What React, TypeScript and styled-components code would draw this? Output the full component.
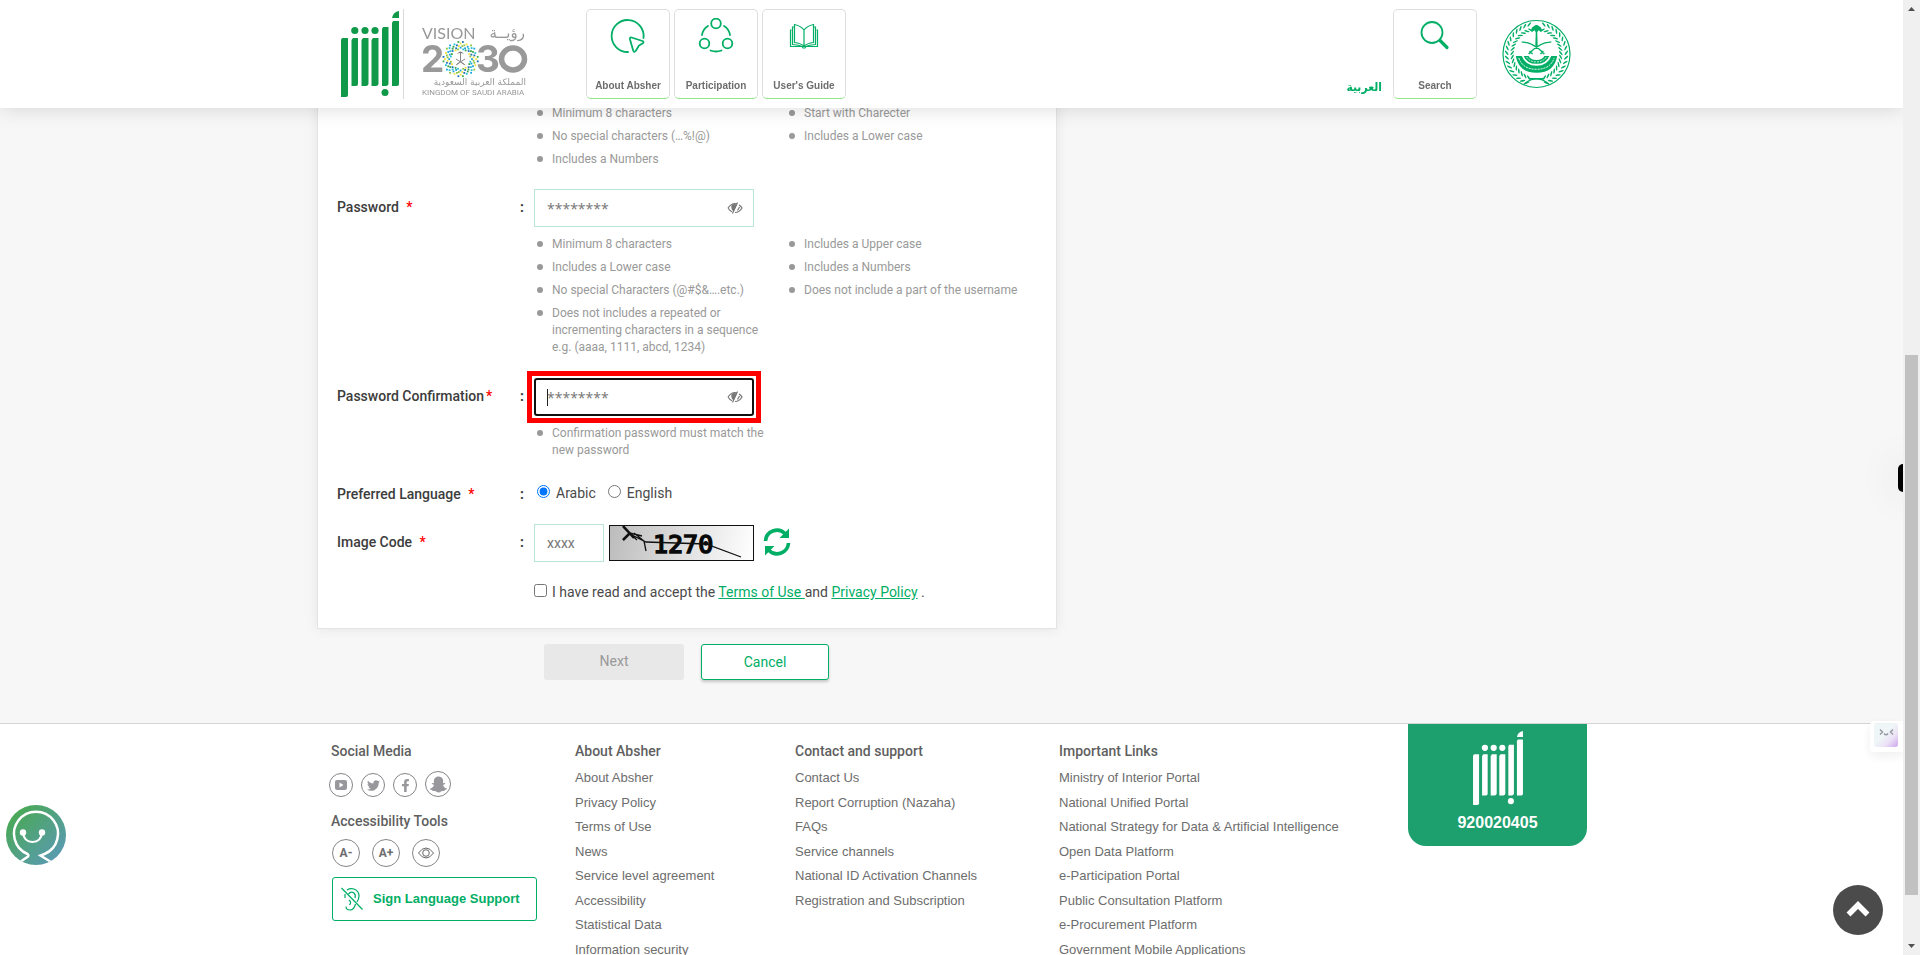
import React from "react";
import styled, { createGlobalStyle, css } from "styled-components";
import { FaTwitter, FaFacebookF, FaSnapchatGhost } from "react-icons/fa";

const GREEN = "#00ae65";
const LOGO_GREEN = "#11994a";
const GREY = "#6d6d6d";
const FONT = `Roboto, "Liberation Sans", sans-serif`;
const FOOTER_FONT = `"Liberation Sans", Arial, sans-serif`;

const GlobalStyle = createGlobalStyle`
  *, *::before, *::after { box-sizing: border-box; }
  body { margin: 0; font-family: ${FONT}; font-size: 14px; color: #3c3c3c; background: #fff; }
  ul, p, h2 { margin: 0; padding: 0; }
  ul { list-style: none; }
  button, input { font-family: inherit; }
`;

const Page = styled.div`
  height: 100vh;
  overflow: hidden;
  padding-right: 17px;
`;

const Container = styled.div`
  width: 100%;
  max-width: 1269px;
  margin: 0 auto;
`;

/* ---------- header ---------- */

const Header = styled.header`
  position: fixed;
  z-index: 5;
  top: 0;
  left: 0;
  right: 17px;
  background: #fff;
  box-shadow: 0 0 20px rgba(0, 0, 0, 0.15);
`;

const HeaderRow = styled(Container)`
  display: flex;
  align-items: flex-start;
  height: 108px;
  padding: 9px 15px 9px 24px;
`;

const Brand = styled.a`
  display: flex;
  height: 90px;
  padding: 2px 4px 0 0;
  border-right: 1px solid #d9d9d9;
`;

const VisionLink = styled.a`
  display: block;
  padding-top: 14px;
  margin: 0 58px 0 18px;
`;

const Nav = styled.nav`
  display: flex;
  gap: 4px;
`;

const cardLook = css`
  display: flex;
  flex-direction: column;
  align-items: center;
  justify-content: space-between;
  width: 84px;
  height: 90px;
  padding: 8px 0 5px;
  background: #fff;
  border: 1px solid #dedede;
  border-bottom-color: #8ee884;
  border-radius: 5px;
  color: ${GREY};
  font-family: ${FOOTER_FONT};
  font-weight: 700;
  font-size: 10px;
  line-height: 14px;
  white-space: nowrap;
  text-decoration: none;
`;

const NavCard = styled.a`
  ${cardLook}
`;

const SearchCard = styled.button`
  ${cardLook}
`;

const HeaderTools = styled.div`
  display: flex;
  align-items: flex-start;
  margin-left: auto;
`;

const LanguageLink = styled.a`
  align-self: flex-end;
  margin: 0 11px 2px 0;
  color: ${GREEN};
  font: 700 12px/20px "DejaVu Sans Condensed", "DejaVu Sans", sans-serif;
  text-decoration: none;
`;

const EmblemBox = styled.div`
  padding: 10px 0 0 25px;
`;

/* ---------- form ---------- */

const Main = styled.main`
  padding: 88px 0 43px;
  background: #f7f7f7;
`;

const FormCard = styled.section`
  width: 740px;
  padding: 16px 18px 26px 19px;
  background: #fff;
  border: 1px solid #e4e4e4;
  box-shadow: 0 0 12px rgba(0, 0, 0, 0.08);
`;

const Row = styled.div<{ $gap?: number }>`
  display: grid;
  grid-template-columns: 183px 14px 1fr;
  margin-top: ${({ $gap }) => $gap ?? 0}px;
`;

const Label = styled.label<{ $tall?: boolean }>`
  font-weight: 500;
  font-size: 14px;
  line-height: ${({ $tall }) => ($tall ? 36 : 20)}px;
`;

const Colon = styled.span<{ $tall?: boolean }>`
  font-weight: 700;
  line-height: ${({ $tall }) => ($tall ? 36 : 20)}px;
`;

const Star = styled.span<{ $near?: boolean }>`
  margin-left: ${({ $near }) => ($near ? 2 : 4)}px;
  color: #f00;
`;

const Field = styled.div`
  grid-column: 3;
`;

const InputBox = styled.div<{ $marked?: boolean }>`
  position: relative;
  width: 220px;
  ${({ $marked }) =>
    $marked &&
    css`
      outline: 5px solid #f00;
      outline-offset: 2px;
      &::before {
        content: "";
        position: absolute;
        left: 13px;
        top: 11px;
        width: 1px;
        height: 17px;
        background: #222;
      }
    `}
`;

const TextInput = styled.input<{ $focus?: boolean }>`
  display: block;
  width: 100%;
  height: 38px;
  padding: 0 12px;
  border: 1px solid #b9e6d6;
  background: #fff;
  font-size: 14px;
  outline: none;
  &::placeholder {
    color: #757575;
    opacity: 1;
  }
  ${({ $focus }) =>
    $focus &&
    css`
      padding: 0 11px;
      border: 2px solid #101010;
      border-radius: 3px;
    `}
  &[type="password"] {
    font-family: "Open Sans", sans-serif;
  }
`;

const EyeToggle = styled.button`
  position: absolute;
  right: 11px;
  top: 11px;
  display: flex;
  padding: 2px 0;
  border: 0;
  background: none;
`;

const Hints = styled.div`
  display: grid;
  grid-template-columns: 252px 1fr;
  align-items: start;
`;

const HintList = styled.ul`
  display: flex;
  flex-direction: column;
  gap: 6px;
`;

const Hint = styled.li`
  position: relative;
  padding: 0 12px 0 18px;
  color: #999;
  font-size: 12px;
  line-height: 17px;
  &::before {
    content: "";
    position: absolute;
    left: 3px;
    top: 5px;
    width: 6px;
    height: 6px;
    border-radius: 50%;
    background: #999;
  }
`;

const Spaced = styled.div`
  margin-top: 9px;
`;

const Radios = styled.div`
  display: flex;
  align-items: center;
  gap: 11px;
  color: #4a4a4a;
`;

const Choice = styled.label`
  display: flex;
  align-items: center;
  gap: 6px;
  height: 20px;
  padding-bottom: 2px;
  input {
    width: 13px;
    height: 13px;
    margin: 0 0 3px 3px;
    accent-color: #0075ff;
  }
  & + & input {
    margin-left: 1px;
  }
`;

const CodeLine = styled.div`
  display: flex;
  align-items: center;
`;

const CodeBox = styled.div`
  width: 70px;
`;

const Captcha = styled.div`
  width: 145px;
  height: 36px;
  margin: 0 9px 0 5px;
  border: 1px solid #111;
  background: linear-gradient(100deg, #bcbcbc, #fff);
`;

const PlainButton = styled.button`
  display: flex;
  padding: 0 0 2px;
  border: 0;
  background: none;
`;

const Terms = styled.div`
  display: flex;
  align-items: center;
  gap: 5px;
  color: #4a4a4a;
  line-height: 20px;
  input {
    width: 13px;
    height: 13px;
    margin: 0 0 3px;
  }
  a {
    color: ${GREEN};
  }
`;

const Actions = styled.div`
  display: flex;
  gap: 17px;
  padding: 15px 0 0 227px;
`;

const ActionButton = styled.button<{ $plain?: boolean }>`
  width: 140px;
  height: 36px;
  padding: 0 0 2px;
  border: 0;
  border-radius: 3px;
  background: #e8e8e8;
  color: #999;
  font-size: 14px;
  ${({ $plain }) =>
    $plain &&
    css`
      width: 128px;
      padding: 0;
      border: 1px solid ${GREEN};
      background: #fff;
      color: ${GREEN};
      box-shadow: 0 2px 3px rgba(0, 0, 0, 0.2);
    `}
`;

/* ---------- footer ---------- */

const Footer = styled.footer`
  border-top: 1px solid #d4d4d4;
  background: #fff;
  font-family: ${FOOTER_FONT};
  color: ${GREY};
`;

const FooterRow = styled(Container)`
  display: grid;
  grid-template-columns: 244px 220px 264px 349px 179px;
  padding-left: 14px;
`;

const FooterColumn = styled.div`
  padding-top: 17px;
`;

const FooterTitle = styled.h2`
  font: 500 14px/20px ${FONT};
  color: #5f5f5f;
`;

const LinkList = styled.ul`
  display: grid;
  grid-template-rows: repeat(8, 1fr);
  height: 196px;
  margin-top: 5px;
  align-items: center;
  font-size: 13px;
  line-height: 20px;
  a {
    color: ${GREY};
    text-decoration: none;
    white-space: nowrap;
  }
`;

const Socials = styled.div`
  display: flex;
  align-items: flex-end;
  gap: 8px;
  height: 26px;
  margin: 10px 0 14px -2px;
`;

const SocialLink = styled.a<{ $large?: boolean }>`
  display: flex;
  align-items: center;
  justify-content: center;
  width: ${({ $large }) => ($large ? 26 : 24)}px;
  height: ${({ $large }) => ($large ? 26 : 24)}px;
  border: 1px solid #85858a;
  border-radius: 50%;
  color: #98989c;
`;

const Tools = styled.div`
  display: flex;
  gap: 12px;
  margin: 8px 0 10px 1px;
`;

const ToolButton = styled.button`
  display: flex;
  align-items: center;
  justify-content: center;
  width: 28px;
  height: 28px;
  padding: 0;
  border: 1px solid #85858a;
  border-radius: 50%;
  background: #fff;
  color: ${GREY};
  font: 700 12px/14px ${FONT};
`;

const SignButton = styled.button`
  display: flex;
  align-items: center;
  gap: 10px;
  width: 205px;
  height: 44px;
  padding: 0 8px;
  margin-left: 1px;
  border: 1px solid ${GREEN};
  border-radius: 3px;
  background: #fff;
  color: ${GREEN};
  font: 700 13px/20px ${FOOTER_FONT};
  white-space: nowrap;
`;

const CallBox = styled.div`
  display: flex;
  flex-direction: column;
  align-items: center;
  align-self: start;
  height: 122px;
  padding-top: 7px;
  border-radius: 0 0 18px 18px;
  background: #1e9f6e;
  color: #fff;
  font-weight: 700;
  font-size: 16px;
  line-height: 36px;
`;

/* ---------- floating parts ---------- */

const ChatBot = styled.button`
  position: fixed;
  left: 6px;
  bottom: 90px;
  padding: 0;
  border: 0;
  background: none;
  display: flex;
`;

const ToTop = styled.button`
  position: fixed;
  right: 37px;
  bottom: 20px;
  display: flex;
  align-items: center;
  justify-content: center;
  width: 50px;
  height: 50px;
  padding: 0 0 2px;
  border: 0;
  border-radius: 50%;
  background: #4b4b4b;
`;

const EdgeTab = styled.div`
  position: fixed;
  right: 17px;
  top: 464px;
  width: 5px;
  height: 28px;
  border-radius: 5px 0 0 5px;
  background: #000;
  box-shadow: 4px 0 40px 10px rgba(0, 0, 0, 0.06);
`;

const EdgeWidget = styled.div`
  position: fixed;
  right: 17px;
  top: 721px;
  padding: 2px 5px 5px 4px;
  border-radius: 4px 0 0 4px;
  background: #fff;
  box-shadow: 0 4px 12px rgba(0, 0, 0, 0.08);
  opacity: 0.9;
`;

const WidgetFace = styled.div`
  width: 24px;
  height: 24px;
  border-radius: 3px;
  background: linear-gradient(135deg, #eef5f8 45%, #eadff6 70%, #c89bea);
  svg {
    display: block;
  }
`;

const ScrollTrack = styled.div`
  position: fixed;
  z-index: 6;
  top: 0;
  right: 0;
  bottom: 0;
  width: 17px;
  display: flex;
  flex-direction: column;
  align-items: center;
  justify-content: space-between;
  padding: 7px 0;
  background: #f0f0f0;
`;

const ScrollThumb = styled.div`
  position: absolute;
  top: 355px;
  left: 2px;
  width: 13px;
  height: 540px;
  background: #c1c1c1;
`;

/* ---------- drawings ---------- */

function AbsherLogo({ width, color }: { width: number; color: string }) {
  return (
    <svg width={width} height={Math.round((width * 86) / 58)} viewBox="0 0 58 86" fill={color} aria-label="Absher">
      <path d="M2 27H7V84Q7 86 5 86H0V29Q0 27 2 27Z" />
      <path d="M12 27H17V73Q17 75 15 75H10.500V29Z" />
      <path d="M22 27H27.500V73Q27 75 25 75H20.500V29Z" />
      <path d="M32 27H37.500V73Q37 75 35 75H30.500V29Z" />
      <path d="M42 16H47.500V73Q47 75 45 75H41V18Z" />
      <path d="M52 10H58V73Q58 75 56 75H51V12Z" />
      <path d="M51 7Q52 1 58 0V7Z" />
      <circle cx="13.800" cy="19.500" r="3.600" />
      <circle cx="24" cy="19.500" r="3.600" />
      <circle cx="34" cy="19.500" r="3.600" />
      <circle cx="44" cy="81.500" r="3.500" />
    </svg>
  );
}

const DOT_COLOURS = ["#18a3dc", "#8ac640", "#f3e13a", "#1d6fb8", "#3aa84a", "#29c0d6"];

function VisionLogo() {
  const dots = [] as React.ReactNode[];
  [10.5, 12.6, 14.7, 16.8].forEach((r, ring) => {
    const n = 24;
    for (let i = 0; i < n; i++) {
      const a = ((i + (ring % 2) / 2) / n) * Math.PI * 2;
      const rr = r + Math.cos(a * 8) * 0.9;
      dots.push(
        <rect
          key={`${ring}-${i}`}
          x={38.5 + Math.cos(a) * rr - 0.8}
          y={36 + Math.sin(a) * rr - 0.8}
          width="1.8"
          height="1.8"
          fill={DOT_COLOURS[(i * 5 + ring) % 6]}
        />
      );
    }
  });
  return (
    <svg width="106" height="76" viewBox="0 0 106 76" fill="#999" aria-label="Vision 2030">
      <text x="0" y="16" fontFamily="Lato, sans-serif" fontSize="16">VISION</text>
      <text x="103" y="15" textAnchor="end" fontFamily="DejaVu Sans, sans-serif" fontSize="15">رؤيــة</text>
      <text x="-1" y="49" fontFamily="Inter, sans-serif" fontWeight="700" fontSize="37">2</text>
      <text x="54" y="49" fontFamily="Inter, sans-serif" fontWeight="700" fontSize="37">3</text>
      <ellipse cx="91" cy="36" rx="11.500" ry="11" fill="none" stroke="#999" strokeWidth="5.500" />
      {dots}
      <path d="M38.500 29V39M38.500 39L34 42M38.500 39L43 42M34 36L42 41M43 36L35 41" stroke="#888" strokeWidth="1" />
      <path d="M35 31Q38.500 26 42 31Q38.500 29 35 31Z" fill="#777" />
      <text x="104" y="62" textAnchor="end" fontFamily="DejaVu Sans, sans-serif" fontSize="9">المملكة العربية السعودية</text>
      <text x="0" y="72" fontFamily="Roboto, sans-serif" fontSize="8">KINGDOM OF SAUDI ARABIA</text>
    </svg>
  );
}

function AboutIcon() {
  return (
    <svg width="36" height="36" viewBox="0 0 36 36" fill="none" stroke={GREEN} strokeWidth="1.800">
      <path d="M18 34A16 16 0 1 1 33.500 20" strokeLinecap="round" />
      <path d="M20 21.500Q19.500 19 21.500 19.500L32.500 23Q34.500 24 32.500 25.500L29 27.500L26 32.500Q24 35 23.200 32.500Z" strokeLinejoin="round" />
    </svg>
  );
}

function ParticipationIcon() {
  return (
    <svg width="36" height="36" viewBox="0 0 36 36" fill="none" stroke={GREEN} strokeWidth="1.800" strokeLinecap="round">
      <circle cx="18" cy="5.500" r="4.800" />
      <circle cx="6.500" cy="25.500" r="4.800" />
      <circle cx="29.500" cy="25.500" r="4.800" />
      <path d="M4 17Q5 11 10 8M32 17Q31 11 26 8M12.500 32.500Q18 34.500 23.500 32.500" />
    </svg>
  );
}

function GuideIcon() {
  return (
    <svg width="36" height="36" viewBox="0 0 36 36" fill="none" stroke={GREEN} strokeWidth="1.200">
      <path d="M18 12Q15 8 8.500 6.500V24.500Q15 25.500 18 28Q21 25.500 27.500 24.500V6.500Q21 8 18 12ZM18 12V28" />
      <path d="M8 9H6.500V26.500Q13 27 16.500 28.500H19.500Q23 27 29.500 26.500V9H28" />
      <path d="M5.500 12H4.500V28.500H16L17 30H19L20 28.500H31.500V12H30.500" />
    </svg>
  );
}

function SearchIcon() {
  return (
    <svg width="36" height="36" viewBox="0 0 36 36" fill="none" stroke={GREEN}>
      <circle cx="15" cy="14.500" r="10.500" strokeWidth="1.800" />
      <path d="M23 22.500L30 29.500" strokeWidth="3.200" strokeLinecap="round" />
    </svg>
  );
}

function Emblem() {
  const leaves = [] as React.ReactNode[];
  for (let i = 0; i < 17; i++) {
    const a = 108 + i * 9.2;
    [-1, 1].forEach((side) => {
      const t = ((side === 1 ? 180 - a : a) * Math.PI) / 180;
      const x = 35 + Math.cos(t) * 27.5;
      const y = 35 + Math.sin(t) * 28;
      const dir = (Math.atan2(y - 35, x - 35) * 180) / Math.PI + (side === 1 ? -90 : 90);
      leaves.push(
        <g key={`${i}${side}`} transform={`translate(${x} ${y}) rotate(${dir})`}>
          <ellipse cx="2" cy="-2" rx="2.800" ry="0.800" transform="rotate(-38)" />
          <ellipse cx="2" cy="2" rx="2.800" ry="0.800" transform="rotate(38)" />
        </g>
      );
    });
  }
  return (
    <svg width="69" height="70" viewBox="0 0 70 70" fill={GREEN} aria-label="Ministry of Interior">
      <circle cx="35" cy="35" r="34" fill="none" stroke={GREEN} strokeWidth="1.200" />
      {leaves}
      <path d="M34.300 11H35.700L36.200 27H33.800Z" />
      <path d="M30 13Q29 8 32 7Q35 4 38 7Q41 8 40 13L37 11L35 14L33 11Z" />
      <path d="M20 23Q30 22 42 34M50 23Q40 22 28 34M28 32L31 35M42 32L39 35M27 35L30 32M43 35L40 32" fill="none" stroke={GREEN} strokeWidth="1.400" />
      <path d="M14 37H20Q24 47 35 47Q46 47 50 37H56Q53 54 35 54Q17 54 14 37Z" />
      <path d="M22 37H27Q29 41 35 41Q41 41 43 37H48Q45 45 35 45Q25 45 22 37Z" />
      <path d="M17 39Q21 50.500 35 50.500Q49 50.500 53 39" fill="none" stroke="#fff" strokeWidth="1" strokeDasharray="2 1" />
      <path d="M25 38Q28 43 35 43Q42 43 45 38" fill="none" stroke="#fff" strokeWidth="0.800" strokeDasharray="2 1" />
      <path d="M22 66Q28 60 35 60.500Q42 60 48 66M27 60H43" fill="none" stroke={GREEN} strokeWidth="1.400" />
    </svg>
  );
}

function HiddenEye() {
  return (
    <svg width="16" height="12" viewBox="0 0 16 12" fill="none" stroke="#777" strokeWidth="1.200">
      <path d="M1 6Q4 1.500 8 1.500Q9.500 1.500 10 2M1 6Q3 9 5 9.800M12 3Q14 4 15 6Q12.500 10.500 8 10.500" />
      <path d="M10.500 0.500L5.500 11.500M12.500 5L10.500 8.500" />
      <path d="M5 3.500Q4.500 7 6.500 8.500L9 3Q7 2 5 3.500Z" fill="#777" />
    </svg>
  );
}

function CaptchaDrawing() {
  return (
    <svg width="143" height="34" viewBox="0 0 143 34" aria-label="Image code 1270">
      <text x="43" y="27" fontFamily="DejaVu Sans Mono, monospace" fontSize="25" stroke="#0c0c0c" strokeWidth="1.600">1270</text>
      <path d="M13 1L27 14M13 14L20 7L32 10M20 8L36 16L96 18L131 31M24 7L34 15L36 25" fill="none" stroke="#111" strokeWidth="1.300" />
      <path d="M13 0L24 12M13 14L20 7" fill="none" stroke="#111" strokeWidth="2.500" />
    </svg>
  );
}

function RefreshIcon() {
  return (
    <svg width="28" height="28" viewBox="0 0 28 28" fill="none" stroke={GREEN} strokeWidth="3.600">
      <path d="M2.500 13A11.500 11.500 0 0 1 22 5.500M25.500 15A11.500 11.500 0 0 1 6 22.500" />
      <path d="M26 0.500V10H16.500Z" fill={GREEN} stroke="none" />
      <path d="M2 27.500V18H11.500Z" fill={GREEN} stroke="none" />
    </svg>
  );
}

function YoutubeMark() {
  return (
    <svg width="12" height="10" viewBox="0 0 12 10">
      <rect width="12" height="10" rx="2" fill="#98989c" />
      <path d="M4.500 2.500L8.500 5L4.500 7.500Z" fill="#fff" />
    </svg>
  );
}

function EyeIcon() {
  return (
    <svg width="16" height="12" viewBox="0 0 16 12" fill="none" stroke="#666" strokeWidth="1">
      <path d="M0.500 6Q4 1 8 1Q12 1 15.500 6Q12 11 8 11Q4 11 0.500 6Z" />
      <circle cx="8" cy="6" r="3.300" />
    </svg>
  );
}

function EarIcon() {
  return (
    <svg width="22" height="24" viewBox="0 0 22 24" fill="none" stroke={GREEN} strokeWidth="1.200">
      <path d="M0.500 1L21.500 22.500" />
      <path d="M6 3Q9 1 13 2Q18 4 18 9Q18 12 16 15M14.500 17Q13 23 9 23Q5 23 5 19.500M4 7V11M7.500 7Q10 4 13 6Q15 8 14 11M8 13Q11 15 8.500 18" />
    </svg>
  );
}

function BotFace() {
  return (
    <svg width="60" height="60" viewBox="0 0 60 60" fill="none" stroke="#fff">
      <defs>
        <linearGradient id="bot" x1="0" y1="0" x2="1" y2="1">
          <stop offset="0.150" stopColor="#4aa858" />
          <stop offset="0.900" stopColor="#5a9ab4" />
        </linearGradient>
        <clipPath id="botClip"><circle cx="30" cy="30" r="30" /></clipPath>
      </defs>
      <circle cx="30" cy="30" r="30" fill="url(#bot)" stroke="none" />
      <g clipPath="url(#botClip)">
        <path d="M14 57L22 51.500Q23 50.500 21.500 49A22 22 0 1 1 38.500 49L34.500 50.500L45 57" strokeWidth="2.500" />
      </g>
      <path d="M17 27.500Q18 37 26.500 37Q35 37 36 27.500" strokeWidth="2.200" />
      <circle cx="17" cy="27.500" r="3.200" fill="#fff" stroke="none" />
      <circle cx="36" cy="27.500" r="3.200" fill="#fff" stroke="none" />
    </svg>
  );
}

/* ---------- data ---------- */

const usernameHints = [
  ["Minimum 8 characters", "No special characters (…%!@)", "Includes a Numbers"],
  ["Start with Charecter", "Includes a Lower case"],
];

const passwordHints = [
  [
    "Minimum 8 characters",
    "Includes a Lower case",
    "No special Characters (@#$&….etc.)",
    "Does not includes a repeated or incrementing characters in a sequence e.g. (aaaa, 1111, abcd, 1234)",
  ],
  ["Includes a Upper case", "Includes a Numbers", "Does not include a part of the username"],
];

const confirmHints = [["Confirmation password must match the new password"]];

const footerColumns = [
  {
    title: "About Absher",
    links: ["About Absher", "Privacy Policy", "Terms of Use", "News", "Service level agreement", "Accessibility", "Statistical Data", "Information security"],
  },
  {
    title: "Contact and support",
    links: ["Contact Us", "Report Corruption (Nazaha)", "FAQs", "Service channels", "National ID Activation Channels", "Registration and Subscription"],
  },
  {
    title: "Important Links",
    links: [
      "Ministry of Interior Portal",
      "National Unified Portal",
      "National Strategy for Data & Artificial Intelligence",
      "Open Data Platform",
      "e-Participation Portal",
      "Public Consultation Platform",
      "e-Procurement Platform",
      "Government Mobile Applications",
    ],
  },
];

function HintColumns({ columns }: { columns: string[][] }) {
  return (
    <Hints>
      {columns.map((items, i) => (
        <HintList key={i}>
          {items.map((text) => (
            <Hint key={text}>{text}</Hint>
          ))}
        </HintList>
      ))}
    </Hints>
  );
}

export default function App() {
  return (
    <Page>
      <GlobalStyle />
      <Header>
        <HeaderRow>
          <Brand href="#home"><AbsherLogo width={58} color={LOGO_GREEN} /></Brand>
          <VisionLink href="#vision"><VisionLogo /></VisionLink>
          <Nav>
            <NavCard href="#about"><AboutIcon />About Absher</NavCard>
            <NavCard href="#participation"><ParticipationIcon />Participation</NavCard>
            <NavCard href="#guide"><GuideIcon />User's Guide</NavCard>
          </Nav>
          <HeaderTools>
            <LanguageLink href="#ar" lang="ar">العربية</LanguageLink>
            <SearchCard type="button"><SearchIcon />Search</SearchCard>
            <EmblemBox><Emblem /></EmblemBox>
          </HeaderTools>
        </HeaderRow>
      </Header>

      <Main>
        <Container as="form">
          <FormCard>
            <Row>
              <Field><HintColumns columns={usernameHints} /></Field>
            </Row>
            <Row $gap={21}>
              <Label htmlFor="password" $tall>Password <Star>*</Star></Label>
              <Colon $tall>:</Colon>
              <Field>
                <InputBox>
                  <TextInput id="password" type="password" placeholder="********" />
                  <EyeToggle type="button" aria-label="Show password"><HiddenEye /></EyeToggle>
                </InputBox>
                <Spaced><HintColumns columns={passwordHints} /></Spaced>
              </Field>
            </Row>
            <Row $gap={22}>
              <Label htmlFor="confirmation" $tall>Password Confirmation<Star $near>*</Star></Label>
              <Colon $tall>:</Colon>
              <Field>
                <InputBox $marked>
                  <TextInput id="confirmation" type="password" placeholder="********" $focus />
                  <EyeToggle type="button" aria-label="Show confirmation"><HiddenEye /></EyeToggle>
                </InputBox>
                <Spaced><HintColumns columns={confirmHints} /></Spaced>
              </Field>
            </Row>
            <Row $gap={25}>
              <Label as="span">Preferred Language <Star>*</Star></Label>
              <Colon>:</Colon>
              <Radios>
                <Choice><input type="radio" name="language" defaultChecked />Arabic</Choice>
                <Choice><input type="radio" name="language" />English</Choice>
              </Radios>
            </Row>
            <Row $gap={20}>
              <Label htmlFor="code" $tall>Image Code <Star>*</Star></Label>
              <Colon $tall>:</Colon>
              <CodeLine>
                <CodeBox><TextInput id="code" type="text" placeholder="xxxx" /></CodeBox>
                <Captcha><CaptchaDrawing /></Captcha>
                <PlainButton type="button" aria-label="Refresh code"><RefreshIcon /></PlainButton>
              </CodeLine>
            </Row>
            <Row $gap={20}>
              <Field>
                <Terms>
                  <input id="terms" type="checkbox" />
                  <label htmlFor="terms">
                    I have read and accept the <a href="#terms">Terms of Use </a>and <a href="#privacy">Privacy Policy</a> .
                  </label>
                </Terms>
              </Field>
            </Row>
          </FormCard>
          <Actions>
            <ActionButton type="submit" disabled>Next</ActionButton>
            <ActionButton type="button" $plain>Cancel</ActionButton>
          </Actions>
        </Container>
      </Main>

      <Footer>
        <FooterRow>
          <FooterColumn>
            <FooterTitle>Social Media</FooterTitle>
            <Socials>
              <SocialLink href="#youtube" aria-label="YouTube"><YoutubeMark /></SocialLink>
              <SocialLink href="#twitter" aria-label="Twitter"><FaTwitter size={13} /></SocialLink>
              <SocialLink href="#facebook" aria-label="Facebook"><FaFacebookF size={13} /></SocialLink>
              <SocialLink href="#snapchat" aria-label="Snapchat" $large><FaSnapchatGhost size={17} /></SocialLink>
            </Socials>
            <FooterTitle>Accessibility Tools</FooterTitle>
            <Tools>
              <ToolButton type="button">A-</ToolButton>
              <ToolButton type="button">A+</ToolButton>
              <ToolButton type="button" aria-label="Contrast"><EyeIcon /></ToolButton>
            </Tools>
            <SignButton type="button"><EarIcon />Sign Language Support</SignButton>
          </FooterColumn>
          {footerColumns.map(({ title, links }) => (
            <FooterColumn key={title}>
              <FooterTitle>{title}</FooterTitle>
              <LinkList>
                {links.map((text) => (
                  <li key={text}><a href="#link">{text}</a></li>
                ))}
              </LinkList>
            </FooterColumn>
          ))}
          <CallBox>
            <AbsherLogo width={50} color="#fff" />
            920020405
          </CallBox>
        </FooterRow>
      </Footer>

      <ChatBot type="button" aria-label="Chat"><BotFace /></ChatBot>
      <EdgeTab />
      <EdgeWidget>
        <WidgetFace>
          <svg width="24" height="24" viewBox="0 0 24 24" fill="none" stroke="#8a8f98" strokeWidth="1.500">
            <path d="M6 6.500L8.500 9L6 11.500M10 10.500Q12 13 14 10.500M19 6.500L16.500 9L19 11.500" />
          </svg>
        </WidgetFace>
      </EdgeWidget>
      <ToTop type="button" aria-label="Back to top">
        <svg width="24" height="18" viewBox="0 0 24 18" fill="none" stroke="#fff" strokeWidth="5.500">
          <path d="M2.500 14.500L12 5L21.500 14.500" />
        </svg>
      </ToTop>
      <ScrollTrack>
        <svg width="7" height="4" viewBox="0 0 7 4"><path d="M0 4L3.500 0L7 4Z" fill="#505050" /></svg>
        <ScrollThumb />
        <svg width="7" height="4" viewBox="0 0 7 4"><path d="M0 0L3.500 4L7 0Z" fill="#505050" /></svg>
      </ScrollTrack>
    </Page>
  );
}
